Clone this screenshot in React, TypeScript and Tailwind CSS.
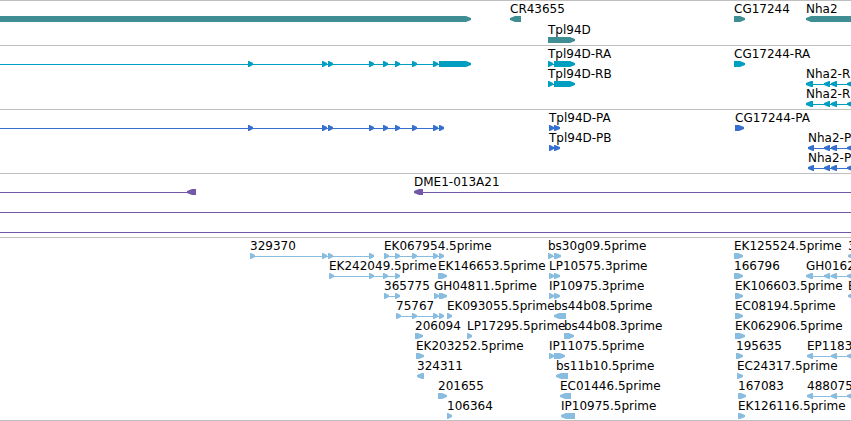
import clsx from "clsx";

type Exon = [start: number, end: number];

interface Feature {
  label?: string;
  exons: Exon[];
  reverse?: boolean;
  /** Intron line, when it runs further than the exons. */
  line?: [number, number];
}

interface Track {
  id: string;
  color: string;
  className?: string;
  rows: Feature[][];
}

/** Features that run off the right side are cut by the track. */
const OPEN_END = 4000;
const GLYPH_HEIGHT = 6;
const TIP = 5;

const transcript: Exon[] = [
  [248, 253],
  [322, 327],
  [328, 333],
  [369, 374],
  [383, 388],
  [395, 400],
  [412, 417],
  [433, 438],
];

const nhaExons: Exon[] = [
  [806, 813],
  [824, 830],
  [831, 837],
  [847, 853],
];

const nhaCds: Exon[] = [[808, 814], ...nhaExons.slice(1)];
const nhaShort: Exon[] = [
  [807, 813],
  [831, 837],
  [847, 853],
];

const tracks: Track[] = [
  {
    id: "genes",
    color: "text-[#3f8e94]",
    className: "gap-px pb-0.5",
    rows: [
      [
        { exons: [[0, 471]] },
        { label: "CR43655", exons: [[510, 521]], reverse: true },
        { label: "CG17244", exons: [[734, 745]] },
        { label: "Nha2", exons: [[806, OPEN_END]], reverse: true },
      ],
      [{ label: "Tpl94D", exons: [[548, 575]] }],
    ],
  },
  {
    id: "transcripts",
    color: "text-[#009fc1]",
    className: "pb-0.5",
    rows: [
      [
        { exons: [...transcript, [439, 471]], line: [0, 440] },
        { label: "Tpl94D-RA", exons: [[548, 553], [554, 575]] },
        { label: "CG17244-RA", exons: [[734, 745]] },
      ],
      [
        { label: "Tpl94D-RB", exons: [[548, 553], [554, 575]] },
        { label: "Nha2-R", exons: nhaExons, reverse: true },
      ],
      [{ label: "Nha2-R", exons: nhaExons, reverse: true }],
    ],
  },
  {
    id: "proteins",
    color: "text-[#3570cf]",
    className: "pb-0.5",
    rows: [
      [
        { exons: [...transcript, [439, 444]], line: [0, 440] },
        { label: "Tpl94D-PA", exons: [[549, 554], [554, 560]] },
        { label: "CG17244-PA", exons: [[735, 744]] },
      ],
      [
        { label: "Tpl94D-PB", exons: [[549, 554], [554, 560]] },
        { label: "Nha2-P", exons: nhaCds, reverse: true },
      ],
      [{ label: "Nha2-P", exons: nhaCds, reverse: true }],
    ],
  },
  {
    id: "clones",
    color: "text-[#7358a8]",
    className: "pb-0.5",
    rows: [
      [
        { exons: [[187, 196]], line: [0, 190], reverse: true },
        { label: "DME1-013A21", exons: [[414, 423]], line: [420, OPEN_END], reverse: true },
      ],
      [{ exons: [], line: [0, OPEN_END] }],
      [{ exons: [], line: [0, OPEN_END] }],
    ],
  },
  {
    id: "ests",
    color: "text-[#89bddf]",
    className: "border-b pb-px",
    rows: [
      [
        { label: "329370", exons: [[250, 255], [322, 327], [328, 333], [369, 374]] },
        { label: "EK067954.5prime", exons: [[384, 389], [395, 400], [412, 417], [433, 438], [439, 444]] },
        { label: "bs30g09.5prime", exons: [[548, 553], [554, 561]] },
        { label: "EK125524.5prime", exons: [[734, 743]] },
        { label: "3", exons: [[848, 857]], reverse: true },
      ],
      [
        { label: "EK242049.5prime", exons: [[329, 334], [369, 374], [383, 388], [395, 400]] },
        { label: "EK146653.5prime", exons: [[438, 447]] },
        { label: "LP10575.3prime", exons: [[549, 554], [554, 560]] },
        { label: "166796", exons: [[734, 743]] },
        { label: "GH0162", exons: nhaExons, reverse: true },
      ],
      [
        { label: "365775", exons: [[384, 389], [395, 400]] },
        { label: "GH04811.5prime", exons: [[434, 439], [439, 447]] },
        { label: "IP10975.3prime", exons: [[549, 554], [554, 560]] },
        { label: "EK106603.5prime", exons: [[735, 743]] },
        { label: "E", exons: [[848, 857]], reverse: true },
      ],
      [
        { label: "75767", exons: [[396, 401], [412, 417], [433, 438], [439, 444]] },
        { label: "EK093055.5prime", exons: [[447, 452]] },
        { label: "bs44b08.5prime", exons: [[554, 566]], reverse: true },
        { label: "EC08194.5prime", exons: [[735, 743]] },
      ],
      [
        { label: "206094", exons: [[415, 423]] },
        { label: "LP17295.5prime", exons: [[467, 472]] },
        { label: "bs44b08.3prime", exons: [[564, 574]] },
        { label: "EK062906.5prime", exons: [[735, 745]] },
      ],
      [
        { label: "EK203252.5prime", exons: [[416, 424]] },
        { label: "IP11075.5prime", exons: [[549, 554], [554, 565]] },
        { label: "195635", exons: [[736, 743]] },
        { label: "EP1183", exons: nhaShort, reverse: true },
      ],
      [
        { label: "324311", exons: [[417, 424]], reverse: true },
        { label: "bs11b10.5prime", exons: [[556, 568]], reverse: true },
        { label: "EC24317.5prime", exons: [[737, 743]] },
      ],
      [
        { label: "201655", exons: [[438, 447]] },
        { label: "EC01446.5prime", exons: [[560, 571]], reverse: true },
        { label: "167083", exons: [[738, 746]] },
        { label: "488075", exons: nhaShort, reverse: true },
      ],
      [
        { label: "106364", exons: [[447, 452]] },
        { label: "IP10975.5prime", exons: [[561, 575]], reverse: true },
        { label: "EK126116.5prime", exons: [[738, 745]] },
      ],
    ],
  },
];

/** A box that narrows to a blunt tip on the strand's side. */
function exonPoints([start, end]: Exon, offset: number, reverse?: boolean) {
  const a = start - offset;
  const b = end - offset;
  const tip = Math.min(TIP, b - a - 1);
  return reverse
    ? `${b},0 ${a + tip},0 ${a},2 ${a},4 ${a + tip},${GLYPH_HEIGHT} ${b},${GLYPH_HEIGHT}`
    : `${a},0 ${b - tip},0 ${b},2 ${b},4 ${b - tip},${GLYPH_HEIGHT} ${a},${GLYPH_HEIGHT}`;
}

function FeatureGlyph({ feature, color }: { feature: Feature; color: string }) {
  const { label, exons, reverse, line } = feature;
  const points = [...exons.flat(), ...(line ?? [])];
  const start = Math.min(...points);
  const end = Math.max(...points);
  const [lineStart, lineEnd] = line ?? [start + 1, end - 1];

  return (
    <div className="absolute top-0" style={{ left: start }}>
      <div className="h-3.5 leading-3.5 whitespace-nowrap">{label}</div>
      <svg width={end - start} height={GLYPH_HEIGHT} className={clsx("block", color)} fill="currentColor" aria-hidden="true">
        {(line || exons.length > 1) && <rect x={lineStart - start} y={3} width={lineEnd - lineStart} height={1} />}
        {exons.map((exon) => (
          <polygon key={exon[0]} points={exonPoints(exon, start, reverse)} />
        ))}
      </svg>
    </div>
  );
}

export default function App() {
  return (
    <main className="w-full overflow-hidden bg-white font-['DejaVu_Sans',sans-serif] text-[12px] text-black">
      {tracks.map((track) => (
        <section
          key={track.id}
          className={clsx("flex flex-col overflow-hidden border-t border-[#bfbfbf] pt-px", track.className)}
        >
          {track.rows.map((row, i) => (
            <div key={i} className="relative h-5">
              {row.map((feature, j) => (
                <FeatureGlyph key={j} feature={feature} color={track.color} />
              ))}
            </div>
          ))}
        </section>
      ))}
    </main>
  );
}
